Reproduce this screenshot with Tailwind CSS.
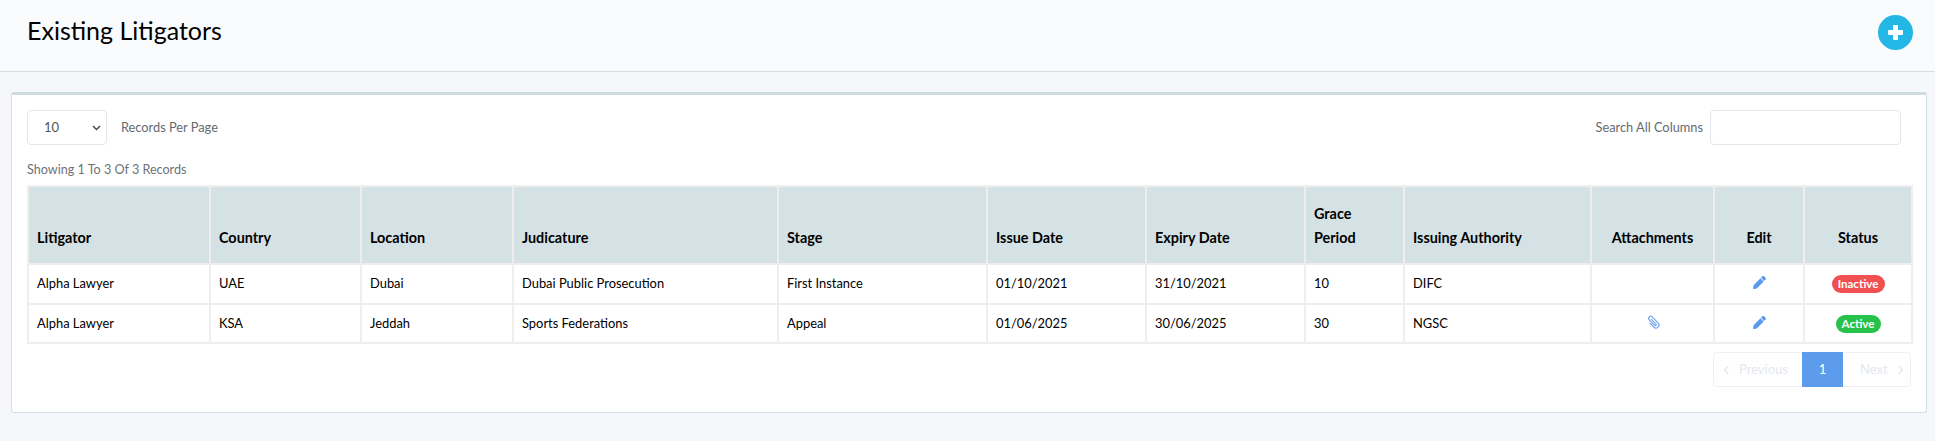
<!DOCTYPE html>
<html>
<head>
    <meta charset="UTF-8"/>
    <title>Existing Litigators</title>
    <script src="https://cdn.jsdelivr.net/npm/@tailwindcss/browser@4"></script>
</head>
<body class="bg-[#f5f7fa] [font-family:Lato,sans-serif] h-[441px] overflow-hidden">

<div class="h-[72px] bg-[#fafbfd] border-b border-[#d3dde6] flex items-center justify-between pl-[27px] pr-[22px]">
    <h1 class="text-[25px] text-black leading-none pb-[11px]">Existing Litigators</h1>
    <button class="w-[35px] h-[35px] rounded-full bg-[#23b7e5] flex items-center justify-center mt-[-6px]">
        <svg width="19" height="19" viewBox="0 0 19 19"><path d="M7.5 2.5h4v5h5v4h-5v5h-4v-5h-5v-4h5z" fill="#fff" stroke="#fff" stroke-width="1" stroke-linejoin="round"/></svg>
    </button>
</div>

<div class="mt-[20px] ml-[11px] mr-[8px] h-[321px] bg-white border border-[#d3dfe6] border-t-[3px] border-t-[#cfdce3] rounded-[3px] pt-[15px] px-[15px]">
    <div class="flex items-center justify-between h-[35px] pr-[10px]">
        <div class="flex items-center text-[12.8px] text-[#666a70]">
            <div class="relative w-[80px] h-[35px]">
                <select class="appearance-none w-full h-full border border-[#e1e7ee] rounded-[4px] pl-[16px] text-[13px] text-[#555] bg-white"><option>10</option></select>
                <svg class="absolute right-[6px] top-[15px]" width="9" height="6" viewBox="0 0 9 6"><path d="M1 1l3.5 3.5L8 1" fill="none" stroke="#444" stroke-width="1.4"/></svg>
            </div>
            <span class="ml-[14px]">Records Per Page</span>
        </div>
        <div class="flex items-center text-[12.8px] text-[#666a70]">
            <span class="mr-[7px]">Search All Columns</span>
            <input class="w-[191px] h-[35px] border border-[#e1e7ee] rounded-[4px] bg-white" />
        </div>
    </div>
    <div class="text-[12.6px] text-[#6e7276] mt-[16px] h-[24px]">Showing 1 To 3 Of 3 Records</div>

    <table class="table-fixed border-collapse w-[1884px] text-[12.9px] text-black border-2 border-[#eeeeee]">
        <colgroup>
            <col class="w-[182px]"/><col class="w-[151px]"/><col class="w-[152px]"/><col class="w-[265px]"/><col class="w-[209px]"/><col class="w-[159px]"/>
            <col class="w-[159px]"/><col class="w-[99px]"/><col class="w-[187px]"/><col class="w-[123px]"/><col class="w-[90px]"/><col class="w-[108px]"/>
        </colgroup>
        <thead>
            <tr class="h-[78px] bg-[#d4e2e5] text-[14.4px] leading-[24px]">
                <th class="border-2 border-[#eeeeee] px-[8px] pb-[13px] align-bottom text-left font-bold">Litigator</th>
                <th class="border-2 border-[#eeeeee] px-[8px] pb-[13px] align-bottom text-left font-bold">Country</th>
                <th class="border-2 border-[#eeeeee] px-[8px] pb-[13px] align-bottom text-left font-bold">Location</th>
                <th class="border-2 border-[#eeeeee] px-[8px] pb-[13px] align-bottom text-left font-bold">Judicature</th>
                <th class="border-2 border-[#eeeeee] px-[8px] pb-[13px] align-bottom text-left font-bold">Stage</th>
                <th class="border-2 border-[#eeeeee] px-[8px] pb-[13px] align-bottom text-left font-bold">Issue Date</th>
                <th class="border-2 border-[#eeeeee] px-[8px] pb-[13px] align-bottom text-left font-bold">Expiry Date</th>
                <th class="border-2 border-[#eeeeee] px-[8px] pb-[13px] align-bottom text-left font-bold">Grace<br/>Period</th>
                <th class="border-2 border-[#eeeeee] px-[8px] pb-[13px] align-bottom text-left font-bold">Issuing Authority</th>
                <th class="border-2 border-[#eeeeee] px-[8px] pb-[13px] align-bottom text-center font-bold">Attachments</th>
                <th class="border-2 border-[#eeeeee] px-[8px] pb-[13px] align-bottom text-center font-bold">Edit</th>
                <th class="border-2 border-[#eeeeee] px-[8px] pb-[13px] align-bottom text-center font-bold">Status</th>
            </tr>
        </thead>
        <tbody>
            <tr class="h-[40px]">
                <td class="border-2 border-[#eeeeee] px-[8px]">Alpha Lawyer</td>
                <td class="border-2 border-[#eeeeee] px-[8px]">UAE</td>
                <td class="border-2 border-[#eeeeee] px-[8px]">Dubai</td>
                <td class="border-2 border-[#eeeeee] px-[8px]">Dubai Public Prosecution</td>
                <td class="border-2 border-[#eeeeee] px-[8px]">First Instance</td>
                <td class="border-2 border-[#eeeeee] px-[8px]">01/10/2021</td>
                <td class="border-2 border-[#eeeeee] px-[8px]">31/10/2021</td>
                <td class="border-2 border-[#eeeeee] px-[8px]">10</td>
                <td class="border-2 border-[#eeeeee] px-[8px]">DIFC</td>
                <td class="border-2 border-[#eeeeee] px-[8px]"></td>
                <td class="border-2 border-[#eeeeee] px-[8px]">
                    <svg class="mx-auto mb-[3px]" width="13" height="13" viewBox="0 0 512 512"><path fill="#5c9aec" d="M497.9 142.1l-46.1 46.1c-4.7 4.7-12.3 4.7-17 0l-111-111c-4.7-4.7-4.7-12.3 0-17l46.1-46.1c18.7-18.7 49.1-18.7 67.9 0l60.1 60.1c18.8 18.7 18.8 49.1 0 67.9zM284.2 99.8L21.6 362.4.4 483.9c-2.9 16.4 11.4 30.6 27.8 27.8l121.5-21.3 262.6-262.6c4.7-4.7 4.7-12.3 0-17l-111-111c-4.8-4.7-12.4-4.7-17.1 0z"/></svg>
                </td>
                <td class="border-2 border-[#eeeeee] px-[8px] text-center">
                    <span class="inline-block w-[53px] h-[18px] leading-[18px] rounded-full bg-[#f05050] text-white text-[11.5px] font-bold">Inactive</span>
                </td>
            </tr>
            <tr class="h-[39px]">
                <td class="border-2 border-[#eeeeee] px-[8px]">Alpha Lawyer</td>
                <td class="border-2 border-[#eeeeee] px-[8px]">KSA</td>
                <td class="border-2 border-[#eeeeee] px-[8px]">Jeddah</td>
                <td class="border-2 border-[#eeeeee] px-[8px]">Sports Federations</td>
                <td class="border-2 border-[#eeeeee] px-[8px]">Appeal</td>
                <td class="border-2 border-[#eeeeee] px-[8px]">01/06/2025</td>
                <td class="border-2 border-[#eeeeee] px-[8px]">30/06/2025</td>
                <td class="border-2 border-[#eeeeee] px-[8px]">30</td>
                <td class="border-2 border-[#eeeeee] px-[8px]">NGSC</td>
                <td class="border-2 border-[#eeeeee] px-[8px]">
                    <svg class="mx-auto mb-[3px]" width="18" height="18" viewBox="0 0 24 24"><path transform="rotate(-45 12 12)" d="M8 10v7.5a4 4 0 0 0 8 0V6.5a2.8 2.8 0 0 0-5.6 0v10a1.3 1.3 0 0 0 2.6 0V8" fill="none" stroke="#6ea5ee" stroke-width="1.5" stroke-linecap="round"/></svg>
                </td>
                <td class="border-2 border-[#eeeeee] px-[8px]">
                    <svg class="mx-auto mb-[3px]" width="13" height="13" viewBox="0 0 512 512"><path fill="#5c9aec" d="M497.9 142.1l-46.1 46.1c-4.7 4.7-12.3 4.7-17 0l-111-111c-4.7-4.7-4.7-12.3 0-17l46.1-46.1c18.7-18.7 49.1-18.7 67.9 0l60.1 60.1c18.8 18.7 18.8 49.1 0 67.9zM284.2 99.8L21.6 362.4.4 483.9c-2.9 16.4 11.4 30.6 27.8 27.8l121.5-21.3 262.6-262.6c4.7-4.7 4.7-12.3 0-17l-111-111c-4.8-4.7-12.4-4.7-17.1 0z"/></svg>
                </td>
                <td class="border-2 border-[#eeeeee] px-[8px] text-center">
                    <span class="inline-block w-[45px] h-[18px] leading-[18px] rounded-full bg-[#27c24c] text-white text-[11.5px] font-bold">Active</span>
                </td>
            </tr>
        </tbody>
    </table>

    <div class="flex justify-end mt-[8px]">
        <div class="flex h-[35px] border border-[#eef1f4] rounded-[4px] text-[13px] text-[#e3e8ee]">
            <span class="w-[88px] flex items-center pl-[9px] gap-[9px]">
                <svg width="7" height="10" viewBox="0 0 7 10"><path d="M5.5 1L1.5 5l4 4" fill="none" stroke="#e3e8ee" stroke-width="1.3"/></svg>
                Previous
            </span>
            <span class="w-[41px] bg-[#5d9cec] text-white flex items-center justify-center -my-px">1</span>
            <span class="w-[67px] flex items-center pl-[17px] gap-[9px]">
                Next
                <svg width="7" height="10" viewBox="0 0 7 10"><path d="M1.5 1l4 4-4 4" fill="none" stroke="#e3e8ee" stroke-width="1.3"/></svg>
            </span>
        </div>
    </div>
</div>

</body>
</html>
